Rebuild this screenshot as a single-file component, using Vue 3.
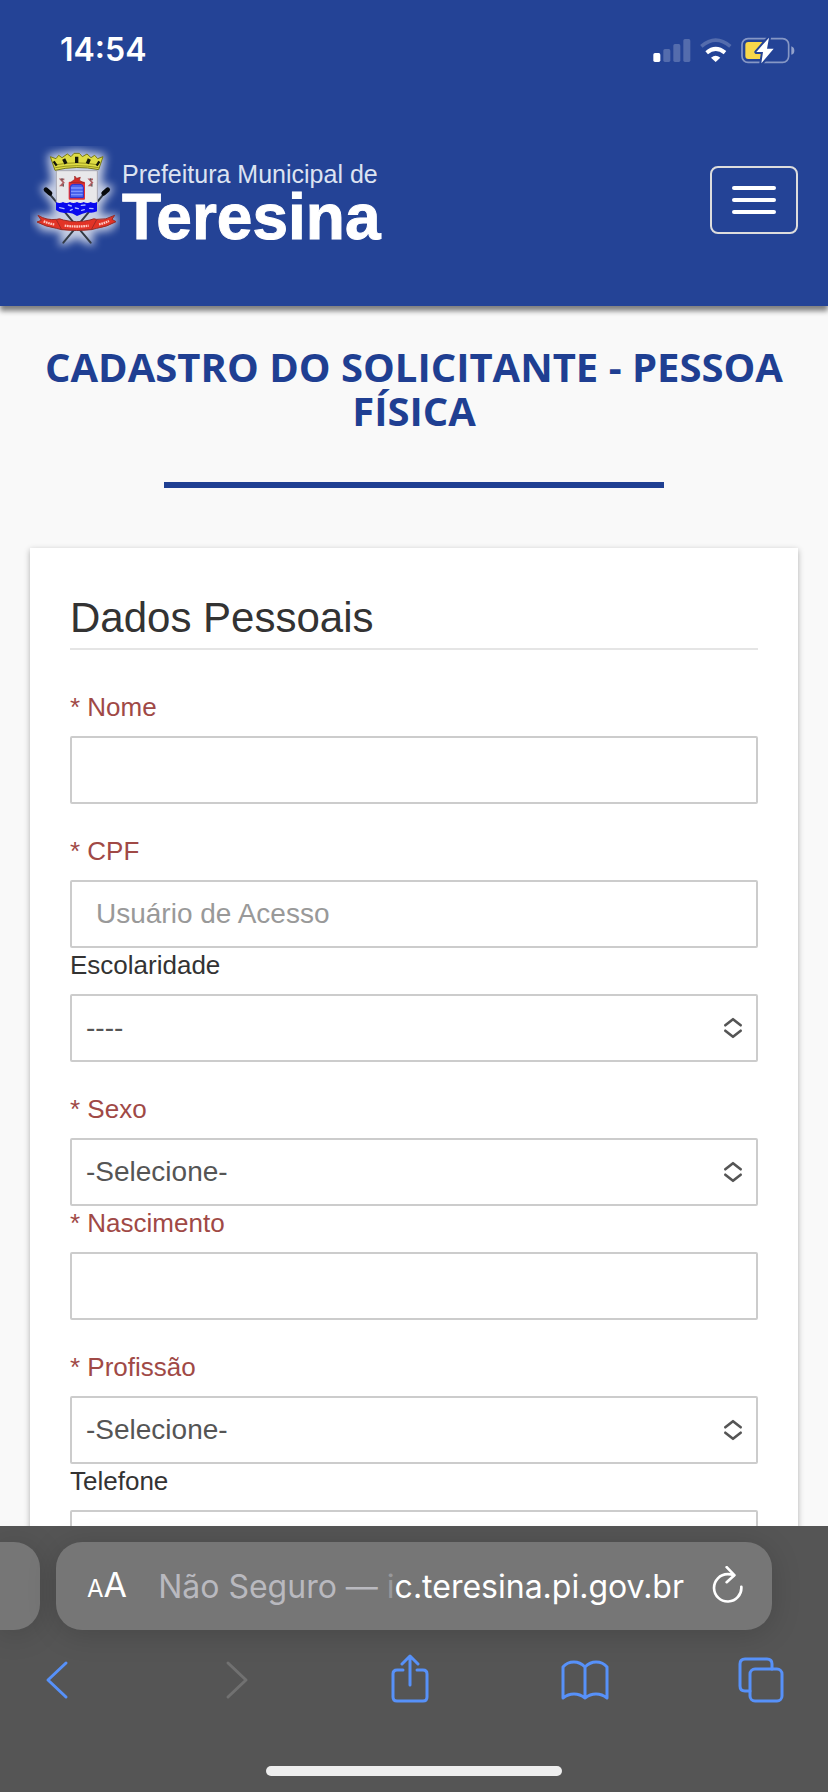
<script setup>
import { reactive } from 'vue'

const groups = [
  [
    { id: 'nome', label: 'Nome', required: true, type: 'text' }
  ],
  [
    { id: 'cpf', label: 'CPF', required: true, type: 'text', placeholder: 'Usuário de Acesso' },
    { id: 'escolaridade', label: 'Escolaridade', type: 'select', option: '----' }
  ],
  [
    { id: 'sexo', label: 'Sexo', required: true, type: 'select', option: '-Selecione-' },
    { id: 'nascimento', label: 'Nascimento', required: true, type: 'text' }
  ],
  [
    { id: 'profissao', label: 'Profissão', required: true, type: 'select', option: '-Selecione-' },
    { id: 'telefone', label: 'Telefone', type: 'text' }
  ]
]

const form = reactive({
  nome: '',
  cpf: '',
  escolaridade: '----',
  sexo: '-Selecione-',
  nascimento: '',
  profissao: '-Selecione-',
  telefone: ''
})
</script>

<template>
  <div class="screen">
    <header class="top">
      <div class="status">
        <span class="time">14:54</span>
        <svg class="status-icons" viewBox="716 108 426 81" aria-hidden="true">
          <rect x="717" y="156" width="21" height="27" rx="5" fill="#fff" />
          <g fill="#fff" opacity=".22">
            <rect x="747" y="144" width="21" height="39" rx="5" />
            <rect x="777" y="129" width="21" height="54" rx="5" />
            <rect x="807" y="114" width="21" height="69" rx="5" />
          </g>
          <path d="M861 136Q904 99 948 136" fill="none" stroke="#fff" stroke-width="11" opacity=".22" />
          <path d="M877 155Q904 132 932 155" fill="none" stroke="#fff" stroke-width="12" />
          <path d="M890 170Q904 158 918 170L904 183Z" fill="#fff" />
          <rect x="983" y="113" width="140" height="71" rx="18" fill="none" stroke="#fff" stroke-width="5" opacity=".45" />
          <path d="M1131 136Q1140 139 1140 149T1131 161Z" fill="#fff" opacity=".5" />
          <rect x="993" y="123" width="56" height="51" rx="9" fill="#f8d74a" />
          <path d="M1064 110L1026 153H1046L1041 187L1078 143H1058Z" fill="#fff" stroke="#244396" stroke-width="12" stroke-linejoin="round" paint-order="stroke" />
        </svg>
      </div>
      <div class="navbar">
        <a class="brand" href="#">
          <svg class="crest" viewBox="30 48 270 324" aria-hidden="true">
            <defs>
              <filter id="halo" x="-30%" y="-30%" width="160%" height="160%">
                <feGaussianBlur stdDeviation="12" />
              </filter>
            </defs>
            <g filter="url(#halo)" fill="#fff" stroke="#fff" stroke-width="18" stroke-linejoin="round" opacity=".75">
              <path d="M92 80L170 68L248 80L234 170L270 175L235 225L232 262L288 264L270 292L205 300L214 338L170 315L126 338L136 300L68 292L50 264L108 262L108 225L72 175L106 170Z" />
            </g>
            <g stroke="#333b45" stroke-width="6" stroke-linecap="round">
              <path d="M82 184L212 338M258 184L130 338" />
            </g>
            <g stroke="#07090c" stroke-width="14" stroke-linecap="round">
              <path d="M78 179L90 190M263 179L251 190" />
            </g>
            <path d="M109 122H232V220Q206 236 170 252Q134 236 109 220Z" fill="#e8e8ea" stroke="#a9a9b4" stroke-width="3" />
            <path d="M108 216Q119 222 129 216Q139 222 150 216Q160 222 171 216Q181 222 191 216Q202 222 212 216Q222 222 231 216V244Q218 250 203 247Q188 250 171 258Q156 247 142 248Q121 251 108 240Z" fill="#0909ee" />
            <g fill="none" stroke="#aebcff" stroke-width="4" stroke-linecap="round">
              <path d="M119 233L132 236M145 225L154 228M151 241L157 238M166 234L175 236M184 226L195 225M185 241L193 239M209 235L219 236" />
            </g>
            <rect x="146" y="155" width="49" height="54" rx="3" fill="#e63232" />
            <path d="M151 158L164 148V138L170 145L181 142L178 151L193 159Z" fill="#d42b28" stroke="#8f2423" stroke-width="2" />
            <path d="M151 173Q151 163 161 163H180Q190 163 190 173V203H151Z" fill="#4863ed" stroke="#242fd4" stroke-width="3" />
            <path d="M153 174H188M153 184H188M153 194H188" stroke="#8095ff" stroke-width="4" />
            <g fill="none" stroke="#b06064" stroke-width="5">
              <path d="M133 148H122L131 158L123 166H130M219 148H208L217 158L209 166H216" />
              <path d="M126 145V151M212 145V151M130 162V170M216 162V170" stroke="#4b5355" stroke-width="3" />
            </g>
            <path d="M91 80L108 86L116 76L126 83L142 72L153 80L162 70H178L187 80L201 72L213 83L224 76L233 86L249 80L236 119Q170 105 105 121Z" fill="#dedc45" stroke="#777817" stroke-width="3" />
            <path d="M106 113Q170 101 236 113M110 104Q170 93 230 104" fill="none" stroke="#99961e" stroke-width="3" />
            <path d="M101 94L110 107M238 94L230 107" stroke="#15170b" stroke-width="7" />
            <path d="M131 87L138 101M170 80V99M208 87L202 101" stroke="#15170b" stroke-width="10" />
            <path d="M54 256Q80 272 110 268Q118 264 130 270Q170 280 210 270Q222 264 230 268Q258 271 284 256L276 268L288 275Q262 290 230 295L214 299Q170 304 125 299L109 295Q76 290 51 276L64 271Z" fill="#e23326" stroke="#942c28" stroke-width="3" />
            <path d="M109 269L125 299M230 269L214 299" stroke="#9f2925" stroke-width="3" />
            <path d="M71 274Q87 281 103 283M134 287Q170 292 206 287M237 283Q253 280 267 273" fill="none" stroke="#ffc9c1" stroke-width="7" stroke-dasharray="5 2" />
          </svg>
          <span class="brand-text">
            <span class="brand-small">Prefeitura Municipal de</span>
            <span class="brand-big">Teresina</span>
          </span>
        </a>
        <button class="menu" type="button" aria-label="Menu">
          <span class="menu-line"></span>
          <span class="menu-line"></span>
          <span class="menu-line"></span>
        </button>
      </div>
    </header>

    <main class="page">
      <h1 class="title">CADASTRO DO SOLICITANTE - PESSOA FÍSICA</h1>
      <div class="rule"></div>
      <form class="card" @submit.prevent>
        <h2 class="legend">Dados Pessoais</h2>
        <div v-for="(group, i) in groups" :key="i" class="group">
          <div v-for="field in group" :key="field.id" class="field">
            <label class="label" :class="{ required: field.required }" :for="field.id">
              <template v-if="field.required">* </template>{{ field.label }}
            </label>
            <div v-if="field.type === 'select'" class="select-wrap">
              <select :id="field.id" v-model="form[field.id]" class="control select">
                <option>{{ field.option }}</option>
              </select>
              <svg class="arrows" viewBox="0 0 18 20" aria-hidden="true">
                <path d="M1.3 7.3L9 1.2L16.7 7.3M1.3 12.7L9 18.8L16.7 12.7" />
              </svg>
            </div>
            <input
              v-else
              :id="field.id"
              v-model="form[field.id]"
              class="control"
              type="text"
              :placeholder="field.placeholder"
            />
          </div>
        </div>
      </form>
    </main>

    <footer class="browser">
      <div class="tabs">
        <div class="previous-tab"></div>
        <div class="address">
          <button class="text-size" type="button" aria-label="Tamanho do texto">
            <span class="small-a">A</span><span class="large-a">A</span>
          </button>
          <span class="url"><span class="insecure">Não Seguro — </span><span class="faded">i</span>c.teresina.pi.gov.br</span>
          <button class="reload" type="button" aria-label="Recarregar">
            <svg viewBox="894 318 96 110" aria-hidden="true">
              <path d="M960 345Q951 342 941 342A41 41 0 1 0 982 380" />
              <path d="M938 321L961 345L938 366" />
            </svg>
          </button>
        </div>
        <div class="next-tab"></div>
      </div>
      <nav class="toolbar">
        <button type="button" aria-label="Voltar">
          <svg viewBox="0 0 48 52"><path d="M33 9L15 26L33 43" /></svg>
        </button>
        <button type="button" class="disabled" aria-label="Avançar" disabled>
          <svg viewBox="0 0 48 52"><path d="M19 9L37 26L19 43" /></svg>
        </button>
        <button type="button" aria-label="Compartilhar">
          <svg viewBox="0 0 48 52">
            <path d="M18 16H12Q8 16 8 20V43Q8 47 12 47H38Q42 47 42 43V20Q42 16 38 16H32M25 31V3M17 10L25 2L33 10" />
          </svg>
        </button>
        <button type="button" aria-label="Favoritos">
          <svg viewBox="0 0 48 52">
            <path d="M24 13Q19 8 13 8Q6 8 2 13V44Q7 40 13 40Q19 40 24 44Q29 40 35 40Q41 40 46 44V13Q42 8 35 8Q29 8 24 13V44" />
          </svg>
        </button>
        <button type="button" aria-label="Abas">
          <svg viewBox="0 0 48 52">
            <path d="M35 15V10Q35 5 30 5H8Q3 5 3 10V32Q3 37 8 37H13" />
            <rect x="13" y="15" width="32" height="32" rx="5" />
          </svg>
        </button>
      </nav>
      <div class="home"></div>
    </footer>
  </div>
</template>

<style>
body {
  margin: 0;
  background: #f9f9f9;
}
</style>

<style scoped>
* {
  box-sizing: border-box;
}

.screen {
  display: flex;
  flex-direction: column;
  height: 100vh;
  overflow: hidden;
  background: #f9f9f9;
  font-family: "Liberation Sans", Arial, sans-serif;
}

button {
  padding: 0;
  border: 0;
  background: none;
  color: inherit;
}

.top {
  flex: none;
  position: relative;
  background: #244396;
  color: #fff;
  box-shadow: 0 5px 5px #808080;
}

.status {
  display: flex;
  align-items: center;
  justify-content: space-between;
  height: 100px;
  padding: 0 33px 0 60px;
}

.time {
  font: 600 32px/40px Inter, sans-serif;
}

.status-icons {
  width: 142px;
  height: 27px;
}

.navbar {
  display: flex;
  align-items: center;
  justify-content: space-between;
  height: 206px;
  padding: 0 30px 6px;
}

.brand {
  display: flex;
  align-items: center;
  color: #fff;
  text-decoration: none;
}

.crest {
  width: 90px;
  height: 108px;
}

.brand-text {
  display: flex;
  flex-direction: column;
  padding: 8px 0 0 2px;
}

.brand-small {
  color: #dde3f1;
  font-size: 25px;
  line-height: 26px;
}

.brand-big {
  font-size: 64px;
  font-weight: 700;
  line-height: 60px;
  -webkit-text-stroke: 1px #fff;
}

.menu {
  display: flex;
  flex-direction: column;
  align-items: center;
  justify-content: center;
  gap: 8px;
  width: 88px;
  height: 68px;
  border: 2px solid #ddd;
  border-radius: 8px;
}

.menu-line {
  width: 44px;
  height: 4px;
  border-radius: 2px;
  background: #fff;
}

.page {
  flex: 1;
  min-height: 0;
  overflow: hidden;
  padding: 39px 30px 0;
}

.title {
  margin: 0;
  color: #1f3f92;
  font: 700 40px/44px "Open Sans", sans-serif;
  text-align: center;
}

.rule {
  width: 500px;
  max-width: 100%;
  height: 6px;
  margin: 49px auto 60px;
  background: #1f3f92;
}

.card {
  padding: 40px;
  background: #fff;
  box-shadow: 0 2px 6px rgba(0, 0, 0, 0.3);
}

.legend {
  margin: 0 0 40px;
  border-bottom: 2px solid #e5e5e5;
  color: #333;
  font-size: 42px;
  font-weight: 400;
  line-height: 60px;
}

.group {
  margin-bottom: 30px;
}

.label {
  display: block;
  margin-bottom: 12px;
  color: #333;
  font-size: 26px;
  line-height: 34px;
}

.required {
  color: #a04946;
}

.control {
  display: block;
  width: 100%;
  height: 68px;
  padding: 0 24px;
  border: 2px solid #ccc;
  border-radius: 2px;
  background: #fff;
  color: #555;
  font-family: inherit;
  font-size: 28px;
}

.control::placeholder {
  color: #999;
  opacity: 1;
}

.select-wrap {
  display: grid;
  align-items: center;
}

.select-wrap > * {
  grid-area: 1 / 1;
}

.select {
  appearance: none;
  padding: 0 44px 2px 14px;
}

.arrows {
  justify-self: end;
  width: 18px;
  height: 20px;
  margin-right: 16px;
  overflow: visible;
  fill: none;
  stroke: #555;
  stroke-width: 2.6;
  stroke-linecap: round;
  stroke-linejoin: round;
  pointer-events: none;
}

.browser {
  flex: none;
  position: relative;
  padding-top: 16px;
  background: #555;
}

.tabs {
  display: flex;
  gap: 16px;
}

.previous-tab,
.address {
  height: 88px;
  background: #767676;
  box-shadow: 0 4px 30px rgba(0, 0, 0, 0.16);
}

.previous-tab {
  width: 40px;
  border-radius: 0 26px 26px 0;
}

.next-tab {
  width: 40px;
}

.address {
  display: flex;
  flex: 1;
  align-items: center;
  padding: 2px 28px 0 31px;
  border-radius: 26px;
  color: #fff;
  font-family: Inter, sans-serif;
}

.text-size {
  font-family: inherit;
  font-size: 34px;
  line-height: 40px;
}

.small-a {
  font-size: 24px;
}

.large-a {
  font-size: 34px;
}

.url {
  margin-left: auto;
  font-size: 32px;
  line-height: 40px;
  white-space: nowrap;
}

.insecure {
  color: #b9b9bf;
}

.faded {
  color: #98989b;
}

.reload {
  margin: 0 0 6px 28px;
}

.reload svg {
  display: block;
  width: 32px;
  height: 37px;
  fill: none;
  stroke: #fff;
  stroke-width: 8;
  stroke-linecap: round;
  stroke-linejoin: round;
}

.toolbar {
  display: flex;
  justify-content: space-between;
  padding: 24px 43px 0 33px;
}

.toolbar button {
  color: #5791f9;
}

.toolbar .disabled {
  color: #717171;
}

.toolbar svg {
  display: block;
  width: 48px;
  height: 52px;
  fill: none;
  stroke: currentColor;
  stroke-width: 3;
  stroke-linecap: round;
  stroke-linejoin: round;
}

.home {
  width: 296px;
  height: 10px;
  margin: 60px auto 16px;
  border-radius: 5px;
  background: #eee;
}
</style>
